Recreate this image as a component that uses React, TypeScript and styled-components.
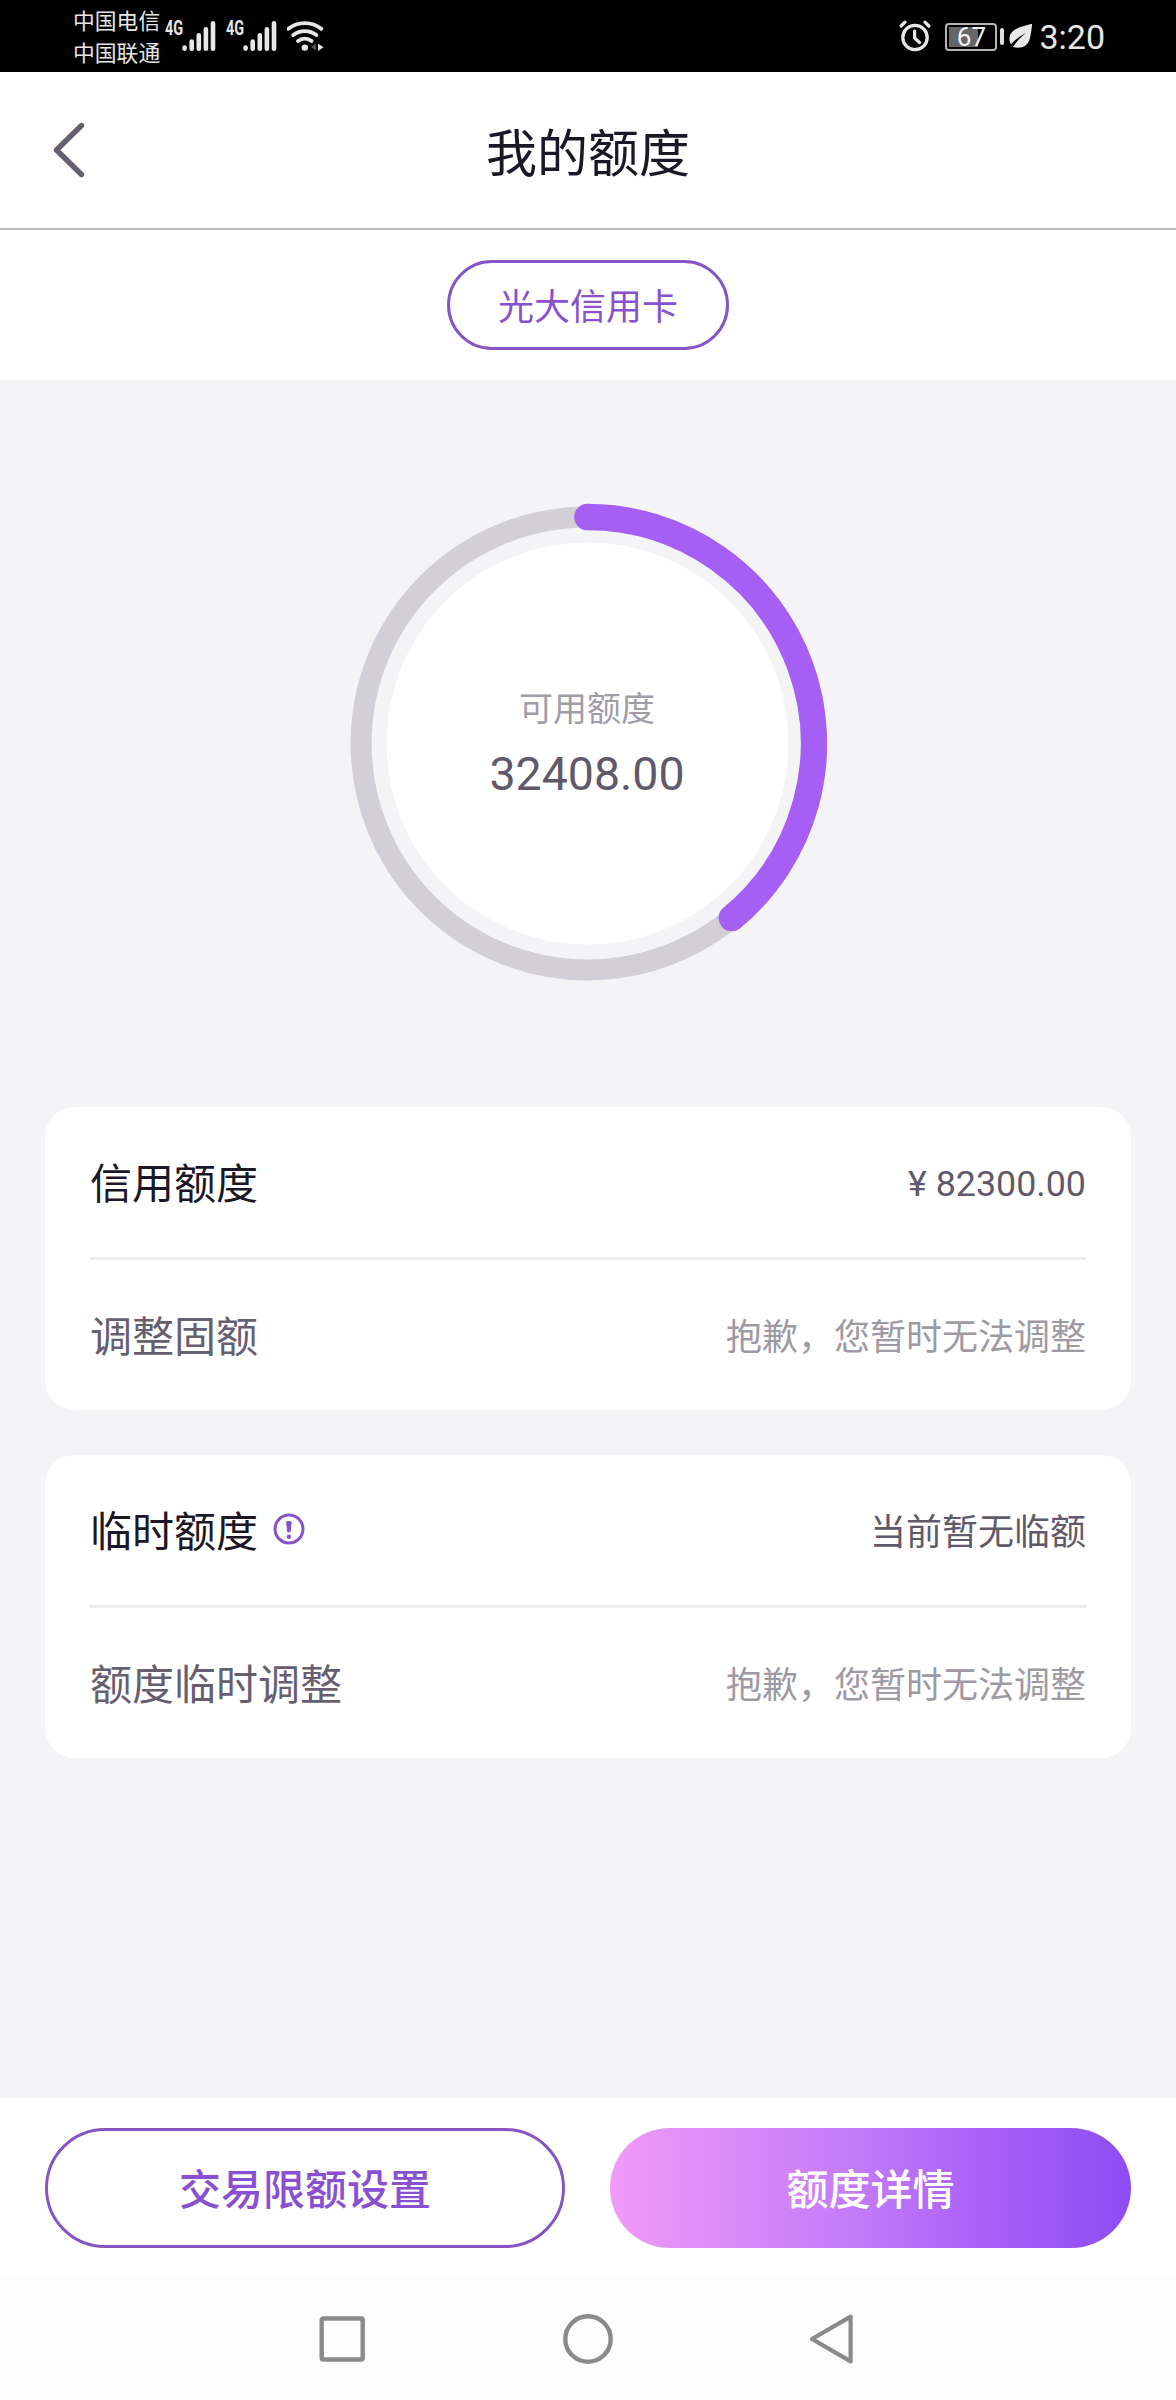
import React from 'react';
import styled, { createGlobalStyle } from 'styled-components';

const GlobalStyle = createGlobalStyle`
  * { box-sizing: border-box; }
  body {
    margin: 0;
    background: #f4f4f7;
    font-family: Roboto, "Noto Sans CJK SC", sans-serif;
  }
  button { font-family: inherit; padding: 0; cursor: pointer; }
  svg { display: block; flex: none; }
`;

const Screen = styled.div`
  width: 1176px;
  height: 2400px;
  display: flex;
  flex-direction: column;
  overflow: hidden;
`;

const StatusBar = styled.div`
  height: 72px;
  flex: none;
  padding: 0 71px 0 73px;
  display: flex;
  justify-content: space-between;
  background: #000;
  color: #e6e6e6;
`;

const StatusGroup = styled.div`
  display: flex;
  align-items: center;
`;

const Carriers = styled.div`
  display: flex;
  flex-direction: column;
  font-size: 21.8px;
  line-height: 32px;
  width: 92px;
  padding-top: 4px;
  white-space: nowrap;
`;

const SignalBox = styled.div`
  display: flex;
  width: 61px;
  height: 72px;
  padding-top: 20px;
`;

const NetworkType = styled.span`
  width: 17px;
  font-size: 20px;
  line-height: 16px;
  font-weight: 700;
  white-space: nowrap;
  transform: scaleX(0.72);
  transform-origin: left center;
`;

const Battery = styled.div`
  display: flex;
  align-items: center;
  gap: 3px;
  margin: 1px 5px 0 14px;
`;

const BatteryCase = styled.div`
  width: 52px;
  height: 28px;
  border: 2px solid #b5b5b5;
  border-radius: 4px;
  padding: 2px;
  display: flex;
`;

const BatteryFill = styled.div<{ $level: number }>`
  width: 44px;
  height: 20px;
  display: flex;
  align-items: center;
  justify-content: center;
  font-size: 26px;
  line-height: 20px;
  color: #f2f2f2;
  background: linear-gradient(to right, #666 ${(p) => p.$level}%, transparent ${(p) => p.$level}%);
`;

const BatteryTip = styled.div`
  width: 4px;
  height: 17px;
  border-radius: 2px;
  background: #dedede;
`;

const Clock = styled.span`
  margin-left: 6px;
  padding-top: 2px;
  font-size: 34px;
  line-height: 40px;
`;

const Header = styled.header`
  height: 158px;
  flex: none;
  display: grid;
  grid-template-columns: 140px 1fr 140px;
  align-items: center;
  background: #fff;
  border-bottom: 2px solid #b8b8b8;
`;

const BackButton = styled.button`
  width: 60px;
  height: 60px;
  margin-left: 40px;
  border: 0;
  background: none;
`;

const Title = styled.h1`
  margin: 9px 0 0;
  text-align: center;
  font-size: 51px;
  line-height: 72px;
  font-weight: 400;
  color: #1c1726;
`;

const CardTabs = styled.div`
  height: 150px;
  flex: none;
  display: flex;
  align-items: center;
  justify-content: center;
  background: #fff;
`;

const CardTab = styled.button`
  width: 282px;
  height: 90px;
  padding-top: 5px;
  border: 3px solid #8654c6;
  border-radius: 45px;
  background: #fff;
  color: #8a50d2;
  font-size: 36px;
  line-height: 52px;
`;

const Content = styled.main`
  flex: 1;
  display: flex;
  flex-direction: column;
  gap: 45px;
  padding: 0 45px;
`;

const GaugeArea = styled.section`
  height: 682px;
  padding: 123px 2px 0 0;
  display: flex;
  justify-content: center;
`;

const Gauge = styled.div`
  width: 480px;
  height: 481px;
  display: grid;
  place-items: center;
  > * { grid-area: 1 / 1; }
`;

const GaugeText = styled.div`
  display: flex;
  flex-direction: column;
  align-items: center;
  padding-top: 1px;
`;

const GaugeLabel = styled.span`
  font-size: 34px;
  line-height: 50px;
  color: #a09da6;
`;

const GaugeValue = styled.strong`
  margin-top: 10px;
  font-weight: 400;
  font-size: 46.5px;
  line-height: 60px;
  color: #5f596a;
`;

const Panel = styled.section`
  height: 303px;
  flex: none;
  padding: 0 45px;
  border-radius: 30px;
  background: #fff;
`;

const Row = styled.div`
  height: 150px;
  padding-top: 6px;
  display: flex;
  align-items: center;
  justify-content: space-between;
  & + & {
    height: 153px;
    border-top: 3px solid #ebebed;
  }
`;

const RowLabel = styled.div<{ $strong?: boolean }>`
  display: flex;
  align-items: center;
  gap: 15px;
  font-size: 42px;
  line-height: 60px;
  color: ${(p) => (p.$strong ? '#1c1726' : '#665f70')};
`;

const RowValue = styled.div<{ $muted?: boolean; $amount?: boolean }>`
  font-size: ${(p) => (p.$amount ? 35.8 : 36)}px;
  line-height: 52px;
  padding-bottom: ${(p) => (p.$amount ? 2 : 0)}px;
  color: ${(p) => (p.$muted ? '#9d9aa3' : '#5f596a')};
`;

const Actions = styled.footer`
  height: 180px;
  flex: none;
  display: grid;
  grid-template-columns: 520px 521px;
  gap: 45px;
  padding: 30px 45px;
  background: #fff;
`;

const ActionButton = styled.button<{ $primary?: boolean }>`
  height: 120px;
  padding-top: 5px;
  border: ${(p) => (p.$primary ? '0' : '3px solid #8654c6')};
  border-radius: 60px;
  background: ${(p) =>
    p.$primary ? 'linear-gradient(to right, #f19bf8 0%, #c078f8 50%, #a960f8 72%, #8d4cf2 100%)' : '#fff'};
  color: ${(p) => (p.$primary ? '#fff' : '#8a50d2')};
  font-size: 42px;
  line-height: 60px;
  font-weight: 500;
`;

const SystemNav = styled.nav`
  height: 122px;
  flex: none;
  display: flex;
  justify-content: center;
  align-items: center;
  gap: 194px;
  background: #fcfcfc;
`;

function Signal() {
  return (
    <SignalBox>
      <NetworkType>4G</NetworkType>
      <svg width="35" height="32" viewBox="0 0 35 32" stroke="#e8e8e8" strokeWidth="4.6" strokeLinecap="round">
        <path d="M2.6 27.6v1M9.7 21.5v7.2M16.8 15.3v13.4M23.9 9.2v19.5M31 3.2v25.5" />
      </svg>
    </SignalBox>
  );
}

function Wifi() {
  return (
    <svg width="40" height="34" viewBox="286 19 40 34" fill="none" stroke="#e8e8e8" strokeWidth="3.8" strokeLinecap="round">
      <path d="M287.3 28.8c9.5-7.6 23.5-7.6 33 0" />
      <path d="M292.2 35c6.8-5.3 16.4-5.3 23.2 0" />
      <path d="M297 41c4-3.2 9.6-3.2 13.6 0" />
      <circle cx="303.8" cy="47.6" r="3.2" fill="#e8e8e8" stroke="none" />
      <path d="M315 43.5v7l-5-3.5z" fill="#555" stroke="none" />
      <path d="M317 43.5v7.5l5.5-3.7z" fill="#e8e8e8" stroke="none" />
    </svg>
  );
}

function Alarm() {
  return (
    <svg width="32" height="32" viewBox="0 0 32 32" fill="none" stroke="#e8e8e8" strokeLinecap="round">
      <circle cx="16" cy="17.5" r="12.2" strokeWidth="3.3" />
      <path d="M15.6 11v7l5 4.6" strokeWidth="3.2" strokeLinejoin="round" />
      <path d="M2.2 6l3.8-3.8M29.8 6L26 2.2" strokeWidth="3.2" />
    </svg>
  );
}

function Leaf() {
  return (
    <svg width="24" height="26" viewBox="0 0 24 26">
      <path d="M23.2.8C15 3 4.5 4.8 1.3 11.500C-.2 15 .4 18.500 2 21.300C5.500 17 9.500 14.500 17 9.800C12 14.500 7.500 18 4 24C12 26 18.800 23.500 20.700 16C22 11 22.600 6 23.200.8Z" fill="#e8e8e8" />
    </svg>
  );
}

const CENTER = 240.5;
const RADIUS = 226.4;
const SWEEP = (140.4 * Math.PI) / 180;

function Ring() {
  const endX = CENTER + RADIUS * Math.sin(SWEEP);
  const endY = CENTER - RADIUS * Math.cos(SWEEP);
  return (
    <svg width="480" height="481" viewBox="0 0 480 481" fill="none">
      <circle cx={CENTER} cy={CENTER} r={RADIUS} stroke="#d2cfd7" strokeWidth="21" />
      <circle cx={CENTER} cy={CENTER} r="201" fill="#fff" />
      <path
        d={`M${CENTER} ${CENTER - RADIUS}A${RADIUS} ${RADIUS} 0 0 1 ${endX} ${endY}`}
        stroke="#a55ff5"
        strokeWidth="26.5"
        strokeLinecap="round"
      />
    </svg>
  );
}

const InfoMark = styled.svg`
  margin-top: -8px;
`;

function InfoIcon() {
  return (
    <InfoMark width="32" height="32" viewBox="0 0 32 32">
      <circle cx="16" cy="16" r="14" fill="none" stroke="#8654c6" strokeWidth="3" />
      <path d="M13.100 9.200C13.100 7.600 18.700 7.600 18.700 9.200L17.600 19.200H14.200Z" fill="#8654c6" />
      <circle cx="15.900" cy="23.700" r="2.200" fill="#8654c6" />
    </InfoMark>
  );
}

export default function App() {
  return (
    <>
      <GlobalStyle />
      <Screen>
        <StatusBar>
          <StatusGroup>
            <Carriers>
              <span>中国电信</span>
              <span>中国联通</span>
            </Carriers>
            <Signal />
            <Signal />
            <Wifi />
          </StatusGroup>
          <StatusGroup>
            <Alarm />
            <Battery>
              <BatteryCase>
                <BatteryFill $level={67}>67</BatteryFill>
              </BatteryCase>
              <BatteryTip />
            </Battery>
            <Leaf />
            <Clock>3:20</Clock>
          </StatusGroup>
        </StatusBar>

        <Header>
          <BackButton aria-label="返回">
            <svg width="60" height="60" viewBox="0 0 60 60" fill="none" stroke="#655f70" strokeWidth="5.400" strokeLinecap="round" strokeLinejoin="round">
              <path d="M41.500 5.500L16.500 30L41.500 54.500" />
            </svg>
          </BackButton>
          <Title>我的额度</Title>
        </Header>

        <CardTabs>
          <CardTab>光大信用卡</CardTab>
        </CardTabs>

        <Content>
          <GaugeArea>
            <Gauge>
              <Ring />
              <GaugeText>
                <GaugeLabel>可用额度</GaugeLabel>
                <GaugeValue>32408.00</GaugeValue>
              </GaugeText>
            </Gauge>
          </GaugeArea>

          <Panel>
            <Row>
              <RowLabel $strong>信用额度</RowLabel>
              <RowValue $amount>¥ 82300.00</RowValue>
            </Row>
            <Row>
              <RowLabel>调整固额</RowLabel>
              <RowValue $muted>抱歉，您暂时无法调整</RowValue>
            </Row>
          </Panel>

          <Panel>
            <Row>
              <RowLabel $strong>
                临时额度
                <InfoIcon />
              </RowLabel>
              <RowValue>当前暂无临额</RowValue>
            </Row>
            <Row>
              <RowLabel>额度临时调整</RowLabel>
              <RowValue $muted>抱歉，您暂时无法调整</RowValue>
            </Row>
          </Panel>
        </Content>

        <Actions>
          <ActionButton>交易限额设置</ActionButton>
          <ActionButton $primary>额度详情</ActionButton>
        </Actions>

        <SystemNav>
          <svg width="50" height="52" viewBox="0 0 50 52" fill="none" stroke="#8a8a8a" strokeWidth="4.400">
            <rect x="3.700" y="5.500" width="41" height="41" rx="1.500" />
          </svg>
          <svg width="52" height="52" viewBox="0 0 52 52" fill="none" stroke="#8a8a8a" strokeWidth="4.400">
            <circle cx="26" cy="26" r="22.700" />
          </svg>
          <svg width="50" height="52" viewBox="0 0 50 52" fill="none" stroke="#8a8a8a" strokeWidth="4.200" strokeLinejoin="round">
            <path d="M42.600 3.600V48.400L4 26Z" />
          </svg>
        </SystemNav>
      </Screen>
    </>
  );
}
